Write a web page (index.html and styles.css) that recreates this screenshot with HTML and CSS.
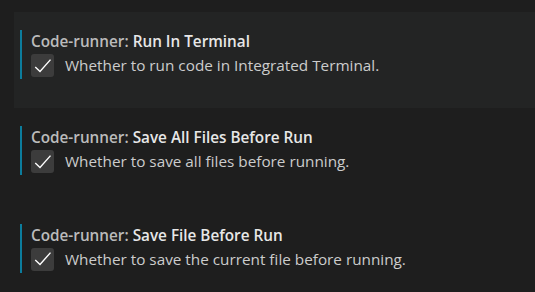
FILE: index.html
```html
<!DOCTYPE html>
<html lang="en">
<head>
    <meta charset="UTF-8">
    <title>Code Runner Settings</title>
    <link rel="stylesheet" href="styles.css">
</head>
<body>
    <div class="settings-list">
        <div class="setting-row focused">
            <div class="setting-item">
                <div class="setting-title"><span class="category">Code-runner: </span><span class="label">Run In Terminal</span></div>
                <div class="setting-value">
                    <span class="checkbox">
                        <svg width="20" height="20" viewBox="0 0 16 16"><path d="M1.8 8.8 L5.6 12.4 L14 2.9" fill="none" stroke="#ffffff" stroke-width="1.1"/></svg>
                    </span>
                    <span class="description">Whether to run code in Integrated Terminal.</span>
                </div>
            </div>
        </div>
        <div class="setting-row">
            <div class="setting-item">
                <div class="setting-title"><span class="category">Code-runner: </span><span class="label">Save All Files Before Run</span></div>
                <div class="setting-value">
                    <span class="checkbox">
                        <svg width="20" height="20" viewBox="0 0 16 16"><path d="M1.8 8.8 L5.6 12.4 L14 2.9" fill="none" stroke="#ffffff" stroke-width="1.1"/></svg>
                    </span>
                    <span class="description">Whether to save all files before running.</span>
                </div>
            </div>
        </div>
        <div class="setting-row">
            <div class="setting-item">
                <div class="setting-title"><span class="category">Code-runner: </span><span class="label">Save File Before Run</span></div>
                <div class="setting-value">
                    <span class="checkbox">
                        <svg width="20" height="20" viewBox="0 0 16 16"><path d="M1.8 8.8 L5.6 12.4 L14 2.9" fill="none" stroke="#ffffff" stroke-width="1.1"/></svg>
                    </span>
                    <span class="description">Whether to save the current file before running.</span>
                </div>
            </div>
        </div>
    </div>
</body>
</html>
```
FILE: styles.css
```css
body {
    margin: 0;
    padding: 0;
    background-color: #1e1e1e;
    font-family: "Open Sans", "Noto Sans", sans-serif;
    font-size: 15.3px;
    color: #cccccc;
    height: 292px;
    overflow: hidden;
}

.settings-list {
    padding: 12px 0 0 14px;
}

.setting-row {
    height: 97.5px;
    box-sizing: border-box;
    padding: 18px 0 0 6px;
}

.setting-row.focused {
    background-color: #232424;
    height: 96px;
}

.setting-item {
    border-left: 2px solid #0c7d9d;
    padding-left: 9px;
    height: 49px;
}

.setting-title {
    font-weight: 600;
    line-height: 22px;
    height: 24px;
}

.category {
    color: #bbbbbb;
}

.label {
    color: #e7e7e7;
}

.setting-value {
    display: flex;
    align-items: center;
    gap: 11px;
}

.checkbox {
    width: 23px;
    height: 23px;
    background-color: #3c3c3c;
    border-radius: 3px;
    display: flex;
    align-items: center;
    justify-content: center;
}

.description {
    color: #cccccc;
    line-height: 23px;
}
```
